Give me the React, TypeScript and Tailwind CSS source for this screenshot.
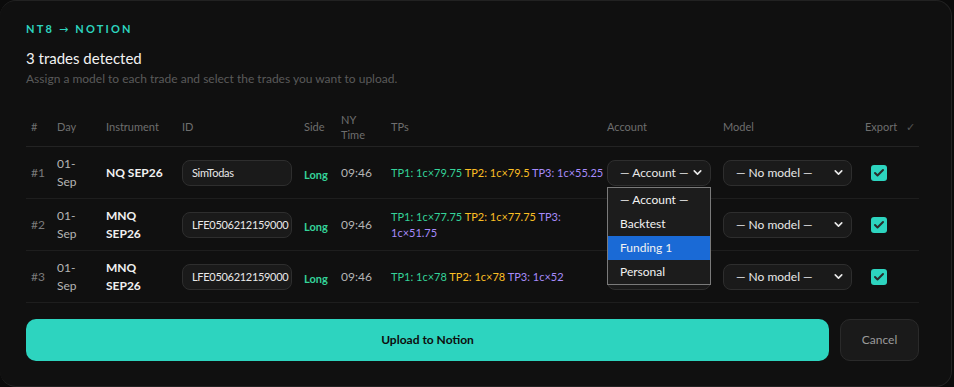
import { ChevronDown, Check } from 'lucide-react';

interface Trade {
  n: number;
  instrument: string;
  id: string;
  tp1: string;
  tp2: string;
  tp3: string;
}

const TRADES: Trade[] = [
  { n: 1, instrument: 'NQ SEP26', id: 'SimTodas', tp1: '1c×79.75', tp2: '1c×79.5', tp3: '1c×55.25' },
  { n: 2, instrument: 'MNQ SEP26', id: 'LFE0506212159000', tp1: '1c×77.75', tp2: '1c×77.75', tp3: '1c×51.75' },
  { n: 3, instrument: 'MNQ SEP26', id: 'LFE0506212159000', tp1: '1c×78', tp2: '1c×78', tp3: '1c×52' },
];

const ACCOUNTS = ['— Account —', 'Backtest', 'Funding 1', 'Personal'];

// column widths measured from the content start of each column
const COLS = 'grid grid-cols-[26px_49px_76px_122px_37px_50px_216px_116px_142px_1fr] items-center pl-[5px]';

const SelectBox = ({ label, width }: { label: string; width: string }) => (
  <div
    className={`${width} h-[26px] flex items-center justify-between pl-[12px] pr-[6px] rounded-lg border border-[#2e2e2e] bg-[#1a1a1a] text-[12px] text-[#e8e8e8] whitespace-nowrap`}
  >
    <span>{label}</span>
    <ChevronDown size={13} strokeWidth={3} className="text-[#e8e8e8] shrink-0" />
  </div>
);

export default function App() {
  return (
    <div className="w-[954px] h-[387px] bg-[#0b0b0b] overflow-hidden" style={{ fontFamily: 'Lato, "Noto Sans", sans-serif' }}>
      <div className="w-[952px] h-[387px] bg-[#101010] border border-l-0 border-[#222] rounded-2xl pt-[20px] pl-[26px] pr-[32px] flex flex-col">
        <p className="text-[#2dd4bf] font-bold text-[11px] tracking-[0.2em] leading-[16px]">
          NT8 <span className="font-normal" style={{ fontFamily: '"DejaVu Sans", sans-serif' }}>→</span> NOTION
        </p>
        <h1 className="mt-[9px] text-[15px] leading-[22px] text-[#f2f2f2]">3 trades detected</h1>
        <p className="mt-[1px] text-[12px] leading-[18px] text-[#5a5a5a]">
          Assign a model to each trade and select the trades you want to upload.
        </p>

        <div className="mt-[19px]">
          {/* Header */}
          <div className={`${COLS} h-[40px] border-b border-[#232323] text-[11px] text-[#6e6e6e] leading-[15px]`}>
            <span>#</span>
            <span>Day</span>
            <span>Instrument</span>
            <span>ID</span>
            <span>Side</span>
            <span>
              NY
              <br />
              Time
            </span>
            <span>TPs</span>
            <span>Account</span>
            <span>Model</span>
            <span className="flex items-center">
              Export<span className="ml-[9px] text-[#555]">✓</span>
            </span>
          </div>

          {TRADES.map((t) => (
            <div key={t.n} className={`${COLS} h-[52px] border-b border-[#1e1e1e] text-[12px] leading-[18px]`}>
              <span className="text-[#7a7a7a]">#{t.n}</span>
              <span className="text-[#b5b5b5] w-[30px]">01-Sep</span>
              <span className="text-[#f0f0f0] font-bold pr-[14px]">{t.instrument}</span>
              <div className="w-[110px] h-[26px] rounded-lg border border-[#2e2e2e] bg-[#1a1a1a] pl-[9px] pr-[2px] flex items-center overflow-hidden">
                <span className="text-[11px] tracking-[-0.3px] text-[#e8e8e8] whitespace-nowrap">{t.id}</span>
              </div>
              <span className="text-[#34d399] font-bold text-[11px] pt-[4px]">Long</span>
              <span className="text-[#b5b5b5]">09:46</span>
              <span className="text-[11px] leading-[16px] pr-[3px]">
                <span className="text-[#34d399]">TP1: {t.tp1}</span>{' '}
                <span className="text-[#fbbf24]">TP2: {t.tp2}</span>{' '}
                <span className="text-[#a78bfa]">TP3: {t.tp3}</span>
              </span>
              <div className="relative">
                <SelectBox label="— Account —" width="w-[104px]" />
                {t.n === 1 && (
                  <div className="absolute left-0 top-[27px] z-10 w-[104px] border border-[#7a7a7a] bg-[#1c1c1c]">
                    {ACCOUNTS.map((a) => (
                      <div
                        key={a}
                        className={`h-[24px] flex items-center pl-[12px] text-[12px] text-[#f2f2f2] ${
                          a === 'Funding 1' ? 'bg-[#1a6ad6]' : ''
                        }`}
                      >
                        {a}
                      </div>
                    ))}
                  </div>
                )}
              </div>
              <SelectBox label="— No model —" width="w-[129px]" />
              <div className="pl-[6px]">
                <div className="w-[16px] h-[16px] rounded-[3px] bg-[#2dd4bf] flex items-center justify-center">
                  <Check size={12} strokeWidth={4} className="text-[#2a2a2a]" />
                </div>
              </div>
            </div>
          ))}
        </div>

        <div className="mt-[16px] flex gap-[11px]">
          <button className="flex-1 h-[42px] rounded-[10px] bg-[#2dd4bf] text-[#0d0d0d] text-[12px] font-bold">
            Upload to Notion
          </button>
          <button className="w-[79px] h-[42px] rounded-[10px] bg-[#1a1a1a] border border-[#2a2a2a] text-[#9a9a9a] text-[12px]">
            Cancel
          </button>
        </div>
      </div>
    </div>
  );
}
